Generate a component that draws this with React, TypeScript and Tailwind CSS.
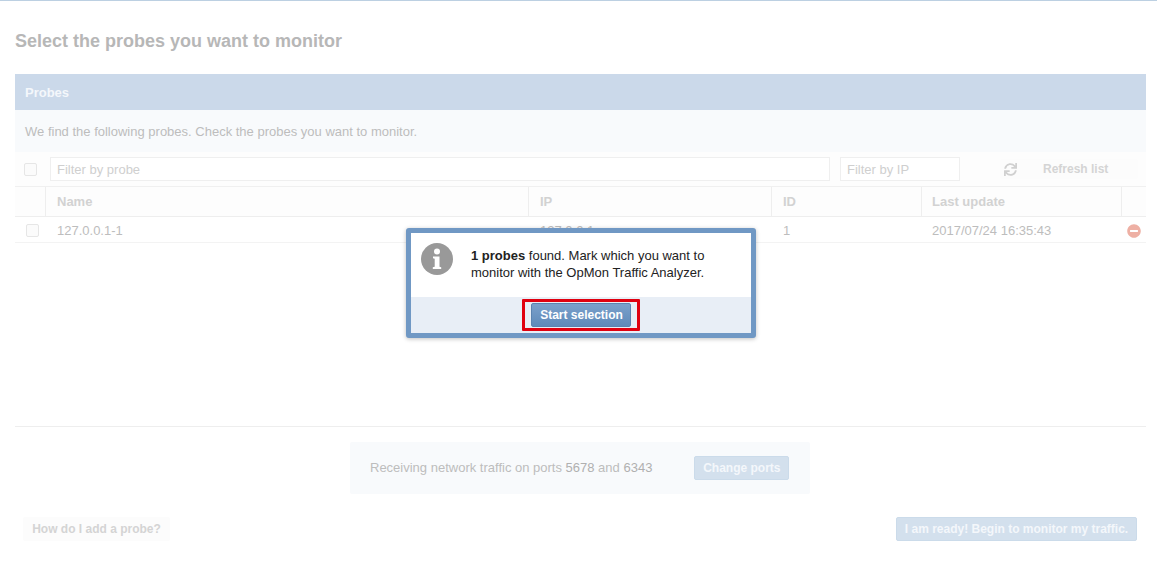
import { FaMinusCircle, FaSync } from "react-icons/fa";

const font = { fontFamily: '"Liberation Sans", Arial, sans-serif' };

const columns = "grid grid-cols-[30px_483px_243px_150px_200px_25px]";

function Checkbox() {
  return <span className="block w-[13px] h-[13px] rounded-[2px] border border-[#e6e6e6] bg-[#fbfbfb]" />;
}

function HeaderCell({ label, tight }: { label?: string; tight?: boolean }) {
  return (
    <div
      className={`border-l border-[#eeeeee] ${tight ? "pl-[10px]" : "pl-[11px]"} text-[13px] font-bold leading-[30px] text-[#d2d2d2] h-[29px]`}
    >
      {label}
    </div>
  );
}

function InfoIcon() {
  return (
    <svg viewBox="0 0 32 32" className="mt-[5px] h-[32px] w-[32px] shrink-0">
      <circle cx="16" cy="16" r="16" fill="#999999" />
      <circle cx="16" cy="8.5" r="3" fill="#ffffff" />
      <path d="M12 13.5h6.5v10.2l1.7.5V26h-8.4v-1.8l1.9-.5v-8l-1.7-.4z" fill="#ffffff" />
    </svg>
  );
}

export default function App() {
  return (
    <div style={font} className="relative h-[575px] w-[1157px] overflow-hidden bg-white border-t border-[#bcd0e2]">
      <div className="pl-[15px] pr-[11px]">
        <h1 className="pt-[30px] text-[18px] leading-[20px] font-bold text-[#b7b7b7]">
          Select the probes you want to monitor
        </h1>

        <div className="mt-[23px] h-[36px] bg-[#cbd9ea] pl-[10px] text-[13px] font-bold leading-[37px] text-[#f4f7fb]">
          Probes
        </div>
        <div className="h-[42px] bg-[#f8fafc] pl-[10px] text-[13px] leading-[43px] text-[#bdbdbd]">
          We find the following probes. Check the probes you want to monitor.
        </div>

        {/* Filters */}
        <div className="flex h-[35px] items-center bg-[#fdfdfd] border-b border-[#f0f0f0]">
          <div className="ml-[9px] w-[26px]">
            <Checkbox />
          </div>
          <div className="w-[780px] h-[24px] border border-[#efefef] bg-white pl-[6px] text-[13px] leading-[24px] text-[#cfcfcf]">
            Filter by probe
          </div>
          <div className="ml-[10px] w-[120px] h-[24px] border border-[#efefef] bg-white pl-[6px] text-[13px] leading-[24px] text-[#cfcfcf]">
            Filter by IP
          </div>
          <div className="ml-[40px] flex h-[20px] w-[138px] items-center rounded-[2px] bg-[#fcfcfc] pl-[4px]">
            <FaSync className="text-[#d0d0d0] w-[13px] h-[13px]" />
            <span className="ml-[26px] text-[12px] font-bold text-[#d4d4d4]">Refresh list</span>
          </div>
        </div>

        {/* Table */}
        <div className={`${columns} bg-[#fdfdfd] border-b border-[#eeeeee]`}>
          <div />
          <HeaderCell label="Name" />
          <HeaderCell label="IP" />
          <HeaderCell label="ID" />
          <HeaderCell label="Last update" tight />
          <HeaderCell />
        </div>
        <div className={`${columns} h-[26px] items-center border-b border-[#f3f3f3] pt-[2px] text-[13px] text-[#bdbdbd]`}>
          <div className="pl-[11px]">
            <Checkbox />
          </div>
          <div className="pl-[12px]">127.0.0.1-1</div>
          <div className="pl-[12px]">127.0.0.1</div>
          <div className="pl-[12px]">1</div>
          <div className="pl-[11px]">2017/07/24 16:35:43</div>
          <div className="pl-[6px]">
            <FaMinusCircle className="text-[#eeb0a4] w-[14px] h-[14px]" />
          </div>
        </div>

        <div className="mt-[183px] border-t border-[#eeeeee]" />

        <div className="ml-[335px] mt-[15px] flex h-[52px] w-[460px] items-center rounded-[2px] bg-[#f8fafc] pl-[20px] text-[13px] text-[#bdbdbd]">
          <span>
            Receiving network traffic on ports <span className="text-[#b0b0b0]">5678</span> and{" "}
            <span className="text-[#b0b0b0]">6343</span>
          </span>
          <button className="ml-[42px] h-[24px] w-[95px] rounded-[2px] border border-[#cbdbea] bg-[#d3e0ed] text-[12px] font-bold text-[#f4f7fb]">
            Change ports
          </button>
        </div>

        <div className="mt-[23px] flex justify-between pl-[8px] pr-[9px]">
          <button className="h-[24px] w-[147px] rounded-[2px] bg-[#fcfcfc] text-[12px] font-bold text-[#d4d4d4]">
            How do I add a probe?
          </button>
          <button className="h-[24px] w-[241px] rounded-[2px] border border-[#cbdbea] bg-[#d3e0ed] text-[12px] font-bold text-[#f4f7fb]">
            I am ready! Begin to monitor my traffic.
          </button>
        </div>
      </div>

      {/* Dialog */}
      <div className="absolute left-[406px] top-[227px] w-[350px] rounded-[3px] border-[5px] border-[#7098c4] bg-white shadow-[0_1px_4px_rgba(0,0,0,0.25)]">
        <div className="flex h-[64px] pl-[10px] pt-[5px]">
          <InfoIcon />
          <p className="ml-[18px] pt-[9px] text-[13px] leading-[17px] text-[#222222]">
            <b>1 probes</b> found. Mark which you want to
            <br />
            monitor with the OpMon Traffic Analyzer.
          </p>
        </div>
        <div className="flex h-[36px] items-center justify-center bg-[#e8eef6]">
          <div className="rounded-[1px] border-[3px] border-[#e0000f] p-[1px] px-[6px]">
            <button className="block h-[24px] w-[100px] rounded-[2px] border border-[#5c83b0] bg-gradient-to-b from-[#7ba0cb] to-[#5f8ab9] pl-px text-[12px] font-bold text-white">
              Start selection
            </button>
          </div>
        </div>
      </div>
    </div>
  );
}
